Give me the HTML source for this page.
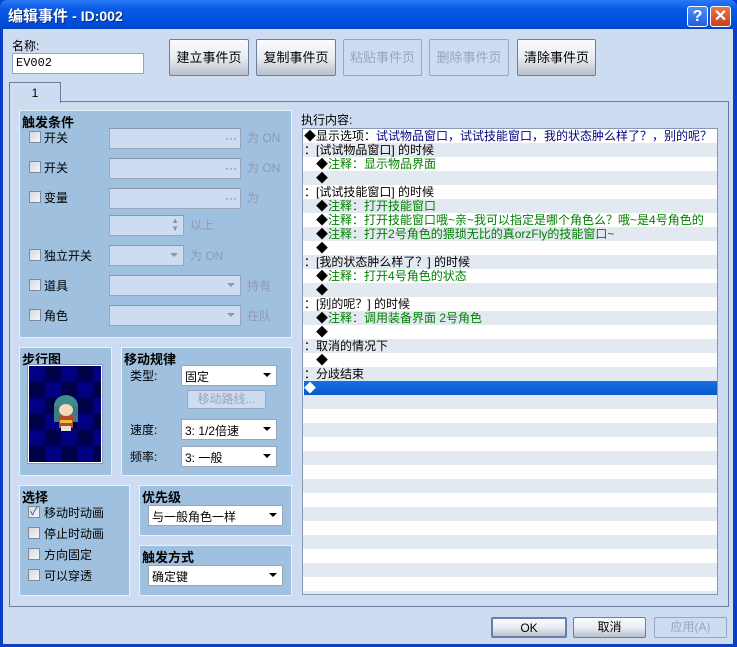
<!DOCTYPE html>
<html><head><meta charset="utf-8"><style>
*{margin:0;padding:0;box-sizing:border-box}
body{width:737px;height:647px;overflow:hidden;background:#0a3ec8;font-family:"Liberation Sans","Noto Sans CJK SC",sans-serif;font-size:12px;color:#000;position:relative}
.a{position:absolute}
.win{left:3px;top:29px;width:730px;height:615px;background:#cddcf1}
.title{left:0;top:0;width:737px;height:29px;background:linear-gradient(#2a7af5,#0a5ae6 30%,#0051de 70%,#0045c9);border-radius:7px 7px 0 0}
.btn{border:1px solid #6d7e9c;border-radius:2px;background:linear-gradient(#fafbfd,#e9ecf2 50%,#b9c0cb);text-align:center;font-size:13px}
.dis{border:1px solid #9aa6bf;background:transparent;color:#9aa3be}
.grp{background:#9fc0de;border:1px solid #e8f0fa}
.gt{font-weight:bold;font-size:13px;left:2px;top:1px}
.cb{width:12px;height:12px;border:1px solid #7f8a9c;background:linear-gradient(135deg,#d6d9de,#f5f6f8)}
.in{background:#cddcf1;border:1px solid #98a6ba;border-top-color:#8a96a8}
.gray{color:#8e99b6}
.wh{background:#fff;border:1px solid #98a6ba}
.arr{position:absolute;right:5px;top:7px;width:0;height:0;border-left:4px solid transparent;border-right:4px solid transparent;border-top:4px solid #000}
.row{position:absolute;left:1px;width:413px;height:14px;line-height:14px;font-size:12px;white-space:nowrap;overflow:hidden}
.n{color:#000080}.g{color:#008000}
</style></head><body>
<div class="a title"></div>
<div class="a" style="left:8px;top:5px;color:#fff;font-size:15px;font-weight:bold;text-shadow:1px 1px #0a2a80">编辑事件 <span style="font-size:14px">- ID:002</span></div>
<div class="a" style="left:687px;top:6px;width:21px;height:21px;border:1px solid #fff;border-radius:3px;background:linear-gradient(#4e8ef8,#2160e0);color:#fff;font-weight:bold;font-size:16px;text-align:center;line-height:19px">?</div>
<div class="a" style="left:710px;top:6px;width:21px;height:21px;border:1px solid #fff;border-radius:3px;background:linear-gradient(#e8774f,#c8401e);color:#fff;font-weight:bold;font-size:16px;text-align:center;line-height:19px">✕</div>
<div class="a win"></div>

<div class="a" style="left:12px;top:37px">名称:</div>
<div class="a wh" style="left:12px;top:53px;width:132px;height:21px;font-family:'Liberation Mono',monospace;padding:2px 3px;font-size:12px">EV002</div>
<div class="a btn" style="left:169px;top:39px;width:80px;height:37px;line-height:35px">建立事件页</div>
<div class="a btn" style="left:256px;top:39px;width:80px;height:37px;line-height:35px">复制事件页</div>
<div class="a btn dis" style="left:343px;top:39px;width:79px;height:37px;line-height:35px">粘贴事件页</div>
<div class="a btn dis" style="left:429px;top:39px;width:80px;height:37px;line-height:35px">删除事件页</div>
<div class="a btn" style="left:517px;top:39px;width:79px;height:37px;line-height:35px">清除事件页</div>

<div class="a" style="left:9px;top:101px;width:720px;height:506px;border:1px solid #6c7c98"></div>
<div class="a" style="left:9px;top:82px;width:52px;height:21px;border:1px solid #6c7c98;border-bottom:none;background:#cddcf1;text-align:center;line-height:20px">1</div>

<!-- 触发条件 -->
<div class="a grp" style="left:19px;top:110px;width:273px;height:228px">
<div class="a gt">触发条件</div>
</div>
<div class="a cb" style="left:29px;top:131px"></div><div class="a" style="left:44px;top:129px">开关</div>
<div class="a in" style="left:109px;top:128px;width:132px;height:21px"><span class="a" style="right:3px;top:2px;color:#6a7898">···</span></div><div class="a gray" style="left:247px;top:129px">为 ON</div>
<div class="a cb" style="left:29px;top:161px"></div><div class="a" style="left:44px;top:159px">开关</div>
<div class="a in" style="left:109px;top:158px;width:132px;height:21px"><span class="a" style="right:3px;top:2px;color:#6a7898">···</span></div><div class="a gray" style="left:247px;top:159px">为 ON</div>
<div class="a cb" style="left:29px;top:191px"></div><div class="a" style="left:44px;top:189px">变量</div>
<div class="a in" style="left:109px;top:188px;width:132px;height:21px"><span class="a" style="right:3px;top:2px;color:#6a7898">···</span></div><div class="a gray" style="left:247px;top:189px">为</div>
<div class="a in" style="left:109px;top:215px;width:75px;height:21px"><span class="a" style="right:4px;top:1px;color:#8a96b0;font-size:8px;line-height:8px">▲<br>▼</span></div><div class="a gray" style="left:190px;top:216px">以上</div>
<div class="a cb" style="left:29px;top:249px"></div><div class="a" style="left:44px;top:247px">独立开关</div>
<div class="a in" style="left:109px;top:245px;width:75px;height:21px"><span class="arr" style="border-top-color:#8a96b0"></span></div><div class="a gray" style="left:190px;top:247px">为 ON</div>
<div class="a cb" style="left:29px;top:279px"></div><div class="a" style="left:44px;top:277px">道具</div>
<div class="a in" style="left:109px;top:275px;width:132px;height:21px"><span class="arr" style="border-top-color:#8a96b0"></span></div><div class="a gray" style="left:247px;top:277px">持有</div>
<div class="a cb" style="left:29px;top:309px"></div><div class="a" style="left:44px;top:307px">角色</div>
<div class="a in" style="left:109px;top:305px;width:132px;height:21px"><span class="arr" style="border-top-color:#8a96b0"></span></div><div class="a gray" style="left:247px;top:307px">在队</div>

<!-- 步行图 -->
<div class="a grp" style="left:19px;top:347px;width:93px;height:129px"><div class="a gt">步行图</div></div>
<div class="a" style="left:28px;top:365px;width:74px;height:98px;border:1px solid #fff;background:#000040;outline:1px solid #8a9ab0">
<svg width="72" height="96" style="display:block">
<defs><pattern id="p" width="32" height="32" patternUnits="userSpaceOnUse"><rect width="16" height="16" fill="#000080"/><rect x="16" y="16" width="16" height="16" fill="#000080"/></pattern></defs>
<rect width="72" height="96" fill="#000048"/><rect width="72" height="96" fill="url(#p)"/>
<ellipse cx="37" cy="40" rx="12" ry="11" fill="#3f8c8a"/>
<rect x="25" y="40" width="24" height="16" fill="#3a7e80"/>
<ellipse cx="37" cy="44" rx="7" ry="6" fill="#f4d8b8"/>
<rect x="30" y="50" width="14" height="12" fill="#b84a2a"/>
<rect x="31" y="54" width="12" height="3" fill="#e8c040"/>
<rect x="32" y="60" width="10" height="5" fill="#e8e0d0"/>
</svg></div>

<!-- 移动规律 -->
<div class="a grp" style="left:121px;top:347px;width:171px;height:129px"><div class="a gt">移动规律</div></div>
<div class="a" style="left:130px;top:367px">类型:</div>
<div class="a wh" style="left:181px;top:365px;width:96px;height:21px;padding:2px 3px">固定<span class="arr"></span></div>
<div class="a btn dis" style="left:187px;top:390px;width:79px;height:19px;line-height:17px;font-size:12px;background:#cddcf1">移动路线...</div>
<div class="a" style="left:130px;top:421px">速度:</div>
<div class="a wh" style="left:181px;top:419px;width:96px;height:21px;padding:2px 3px">3: 1/2倍速<span class="arr"></span></div>
<div class="a" style="left:130px;top:448px">频率:</div>
<div class="a wh" style="left:181px;top:446px;width:96px;height:21px;padding:2px 3px">3: 一般<span class="arr"></span></div>

<!-- 选择 -->
<div class="a grp" style="left:19px;top:485px;width:111px;height:111px"><div class="a gt">选择</div></div>
<div class="a cb" style="left:28px;top:506px;font-size:11px;line-height:10px;color:#2a4aa0;text-align:center">✓</div><div class="a" style="left:44px;top:504px">移动时动画</div>
<div class="a cb" style="left:28px;top:527px"></div><div class="a" style="left:44px;top:525px">停止时动画</div>
<div class="a cb" style="left:28px;top:548px"></div><div class="a" style="left:44px;top:546px">方向固定</div>
<div class="a cb" style="left:28px;top:569px"></div><div class="a" style="left:44px;top:567px">可以穿透</div>

<div class="a grp" style="left:139px;top:485px;width:153px;height:51px"><div class="a gt">优先级</div></div>
<div class="a wh" style="left:148px;top:505px;width:135px;height:21px;padding:2px 3px">与一般角色一样<span class="arr"></span></div>
<div class="a grp" style="left:139px;top:545px;width:153px;height:51px"><div class="a gt">触发方式</div></div>
<div class="a wh" style="left:148px;top:565px;width:135px;height:21px;padding:2px 3px">确定键<span class="arr"></span></div>

<!-- 执行内容 -->
<div class="a" style="left:301px;top:111px">执行内容:</div>
<div class="a" style="left:302px;top:128px;width:416px;height:467px;background:#fff;border:1px solid #8a98b0;overflow:hidden">
<div style="position:absolute;left:0;top:0;width:416px;height:467px;background:repeating-linear-gradient(#fff 0 14px,#e3e9f1 14px 28px)"></div>
<div class="row" style="top:0"><span>◆显示选项：</span><span class="n">试试物品窗口，试试技能窗口，我的状态肿么样了？，别的呢？</span></div>
<div class="row" style="top:14px">：[试试物品窗口] 的时候</div>
<div class="row" style="top:28px">　◆<span class="g">注释：显示物品界面</span></div>
<div class="row" style="top:42px">　◆</div>
<div class="row" style="top:56px">：[试试技能窗口] 的时候</div>
<div class="row" style="top:70px">　◆<span class="g">注释：打开技能窗口</span></div>
<div class="row" style="top:84px">　◆<span class="g">注释：打开技能窗口哦~亲~我可以指定是哪个角色么？哦~是4号角色的</span></div>
<div class="row" style="top:98px">　◆<span class="g">注释：打开2号角色的猥琐无比的真orzFly的技能窗口~</span></div>
<div class="row" style="top:112px">　◆</div>
<div class="row" style="top:126px">：[我的状态肿么样了？] 的时候</div>
<div class="row" style="top:140px">　◆<span class="g">注释：打开4号角色的状态</span></div>
<div class="row" style="top:154px">　◆</div>
<div class="row" style="top:168px">：[别的呢？] 的时候</div>
<div class="row" style="top:182px">　◆<span class="g">注释：调用装备界面 2号角色</span></div>
<div class="row" style="top:196px">　◆</div>
<div class="row" style="top:210px">：取消的情况下</div>
<div class="row" style="top:224px">　◆</div>
<div class="row" style="top:238px">：分歧结束</div>
<div class="row" style="top:252px;background:linear-gradient(#1670e0,#0a58d0);color:#fff">◆</div>
</div>

<!-- bottom -->
<div class="a btn" style="left:491px;top:617px;width:76px;height:21px;line-height:19px;border:2px solid #6a7fa8;font-size:12px">OK</div>
<div class="a btn" style="left:573px;top:617px;width:73px;height:21px;line-height:19px;font-size:12px">取消</div>
<div class="a btn dis" style="left:654px;top:617px;width:73px;height:21px;line-height:19px;font-size:12px">应用(A)</div>
</body></html>
